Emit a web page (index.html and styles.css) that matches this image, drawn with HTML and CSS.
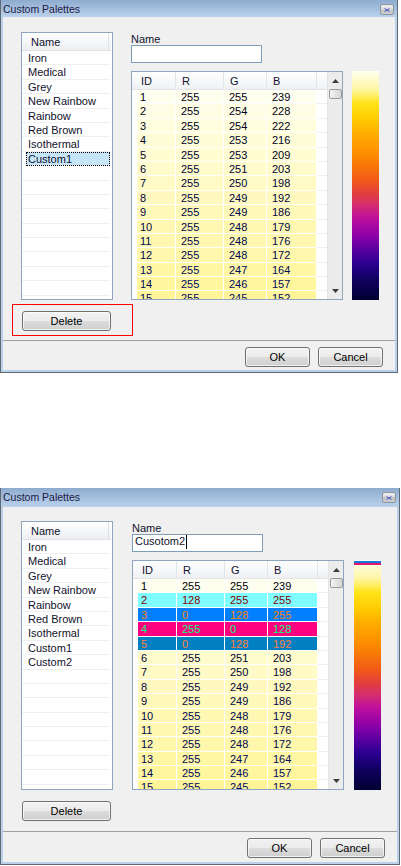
FILE: index.html
```html
<!DOCTYPE html>
<html lang="en">
<head>
    <meta charset="UTF-8">
    <title>Custom Palettes</title>
    <link rel="stylesheet" href="styles.css">
</head>
<body>
    <!-- first state: Custom1 selected -->
    <div class="dialog dialog--a">
        <div class="titlebar">
            <span class="title">Custom Palettes</span>
            <span class="close-btn"><svg width="6" height="4" viewBox="0 0 6 4"><path d="M0.5 0.5 L5.5 3.5 M5.5 0.5 L0.5 3.5" stroke="#4a52d0" stroke-width="1"/></svg></span>
        </div>
        <div class="client">
            <div class="main">
                <div class="palette-list">
                    <div class="list-header"><span>Name</span></div>
                    <div class="list-rows" id="listA"></div>
                </div>
                <div class="editor">
                    <div class="editor-label">Name</div>
                    <div class="name-input"></div>
                    <div class="editor-body">
                        <div class="grid">
                            <div class="grid-main">
                                <div class="grid-head">
                                    <span class="gh gh-pre"></span>
                                    <span class="gh c-id">ID</span>
                                    <span class="gh c-r">R</span>
                                    <span class="gh c-g">G</span>
                                    <span class="gh c-b">B</span>
                                    <span class="gh gh-fill"></span>
                                </div>
                                <div class="grid-rows" id="gridA"></div>
                            </div>
                            <div class="scrollbar">
                                <div class="sb-btn"><svg width="7" height="4" viewBox="0 0 7 4"><polygon points="0,4 3.5,0 7,4" fill="#3c3c3c"/></svg></div>
                                <div class="sb-thumb"></div>
                                <div class="sb-track"></div>
                                <div class="sb-btn"><svg width="7" height="4" viewBox="0 0 7 4"><polygon points="0,0 7,0 3.5,4" fill="#3c3c3c"/></svg></div>
                            </div>
                        </div>
                        <div class="gradient-bar"></div>
                    </div>
                </div>
            </div>
            <div class="delete-row">
                <div class="delete-wrap">
                    <button class="btn btn-delete">Delete</button>
                    <span class="mark-box"></span>
                </div>
            </div>
            <div class="separator"></div>
            <div class="footer">
                <button class="btn btn-small">OK</button>
                <button class="btn btn-small">Cancel</button>
            </div>
        </div>
    </div>

    <!-- second state: Custom2 being edited -->
    <div class="dialog dialog--b">
        <div class="titlebar">
            <span class="title">Custom Palettes</span>
            <span class="close-btn"><svg width="6" height="4" viewBox="0 0 6 4"><path d="M0.5 0.5 L5.5 3.5 M5.5 0.5 L0.5 3.5" stroke="#4a52d0" stroke-width="1"/></svg></span>
        </div>
        <div class="client">
            <div class="main">
                <div class="palette-list">
                    <div class="list-header"><span>Name</span></div>
                    <div class="list-rows" id="listB"></div>
                </div>
                <div class="editor">
                    <div class="editor-label">Name</div>
                    <div class="name-input">Cusotom2<span class="caret"></span></div>
                    <div class="editor-body">
                        <div class="grid">
                            <div class="grid-main">
                                <div class="grid-head">
                                    <span class="gh gh-pre"></span>
                                    <span class="gh c-id">ID</span>
                                    <span class="gh c-r">R</span>
                                    <span class="gh c-g">G</span>
                                    <span class="gh c-b">B</span>
                                    <span class="gh gh-fill"></span>
                                </div>
                                <div class="grid-rows" id="gridB"></div>
                            </div>
                            <div class="scrollbar">
                                <div class="sb-btn"><svg width="7" height="4" viewBox="0 0 7 4"><polygon points="0,4 3.5,0 7,4" fill="#3c3c3c"/></svg></div>
                                <div class="sb-thumb"></div>
                                <div class="sb-track"></div>
                                <div class="sb-btn"><svg width="7" height="4" viewBox="0 0 7 4"><polygon points="0,0 7,0 3.5,4" fill="#3c3c3c"/></svg></div>
                            </div>
                        </div>
                        <div class="gradient-bar gradient-bar--marked"></div>
                    </div>
                </div>
            </div>
            <div class="delete-row">
                <div class="delete-wrap">
                    <button class="btn btn-delete">Delete</button>
                </div>
            </div>
            <div class="separator"></div>
            <div class="footer">
                <button class="btn btn-small">OK</button>
                <button class="btn btn-small">Cancel</button>
            </div>
        </div>
    </div>

    <script>
        document.addEventListener('DOMContentLoaded', () => {
            const names = ['Iron', 'Medical', 'Grey', 'New Rainbow', 'Rainbow', 'Red Brown', 'Isothermal', 'Custom1'];
            const basePalette = [
                [1, 255, 255, 239], [2, 255, 254, 228], [3, 255, 254, 222], [4, 255, 253, 216],
                [5, 255, 253, 209], [6, 255, 251, 203], [7, 255, 250, 198], [8, 255, 249, 192],
                [9, 255, 249, 186], [10, 255, 248, 179], [11, 255, 248, 176], [12, 255, 248, 172],
                [13, 255, 247, 164], [14, 255, 246, 157], [15, 255, 245, 152]
            ];

            // Custom2: rows 2-5 edited by the user
            const editedPalette = basePalette.map(row => row.slice());
            editedPalette[1] = [2, 128, 255, 255];
            editedPalette[2] = [3, 0, 128, 255];
            editedPalette[3] = [4, 255, 0, 128];
            editedPalette[4] = [5, 0, 128, 192];

            function fillList(el, items, selected) {
                for (let i = 0; i < 18; i++) {
                    const row = document.createElement('div');
                    row.className = 'list-row';
                    if (items[i]) row.textContent = items[i];
                    if (items[i] && items[i] === selected) row.classList.add('selected');
                    el.appendChild(row);
                }
            }

            function fillGrid(el, rows) {
                rows.forEach(([id, r, g, b]) => {
                    const row = document.createElement('div');
                    row.className = 'grid-row';
                    const bg = `rgb(${r}, ${g}, ${b})`;
                    const fg = `rgb(${255 - r}, ${255 - g}, ${255 - b})`;
                    let html = '<span class="gc gh-pre"></span>';
                    [['c-id', id], ['c-r', r], ['c-g', g], ['c-b', b]].forEach(([cls, val]) => {
                        html += `<span class="gc ${cls}" style="background:${bg};color:${fg}">${val}</span>`;
                    });
                    html += '<span class="gc gc-fill"></span>';
                    row.innerHTML = html;
                    el.appendChild(row);
                });
            }

            fillList(document.getElementById('listA'), names, 'Custom1');
            fillList(document.getElementById('listB'), names.concat('Custom2'), null);
            fillGrid(document.getElementById('gridA'), basePalette);
            fillGrid(document.getElementById('gridB'), editedPalette);
        });
    </script>
</body>
</html>
```

FILE: styles.css
```css
* { box-sizing: border-box; }
body { margin: 0; background: #fff; font-family: "Liberation Sans", Arial, sans-serif; font-size: 11px; color: #12122e; }

.dialog { width: var(--win-w); border: 1px solid #5f6873; border-top: 0; background: #f0f0f0; }
.dialog--a { --win-w: 398px; --title-h: 17px; --top-pad: 15px; --pane-h: 268px; --col-gap: 18px; --bar-gap: 9px; --sep-gap: 9px; --bottom-pad: 3px; }
.dialog--b { --win-w: 400px; --title-h: 19px; --top-pad: 14px; --pane-h: 269px; --col-gap: 19px; --bar-gap: 10px; --sep-gap: 10px; --bottom-pad: 4px; margin-top: 115px; }

.titlebar { height: var(--title-h); display: flex; justify-content: space-between; align-items: flex-start; padding: 0 3px 0 2px; background: linear-gradient(#8eabcf, #bad2eb); overflow: hidden; }
.title { line-height: 19px; font-size: 10.5px; color: #1a1a46; }
.close-btn { width: 14px; height: 11px; margin-top: 4px; display: flex; align-items: center; justify-content: center; border: 1px solid #8b96a3; border-radius: 2px; background: linear-gradient(#efefef, #d8d8d8 50%, #c4c4c4 50%, #cdcdcd); }

.client { border: 2px solid #b9d1ea; border-top: 0; padding: var(--top-pad) 12px var(--bottom-pad) 18px; }
.main { display: flex; height: var(--pane-h); }

/* palette name list */
.palette-list { width: 92px; border: 1px solid #8fa5bf; background: #fff; display: flex; flex-direction: column; padding-right: 1px; overflow: hidden; }
.list-header { height: 18px; flex-shrink: 0; line-height: 18px; display: flex; background: linear-gradient(#ffffff, #f6f7f8 50%, #eceef1); border-bottom: 1px solid #dfe3e8; }
.list-header span { flex: 1; padding-left: 9px; border-right: 1px solid #dfe3e8; margin-right: 2px; }
.list-rows { flex: 1; min-height: 0; overflow: hidden; }
.list-row { height: 14.4px; line-height: 14px; padding-left: 6px; margin-right: 1px; border-bottom: 1px solid #efefef; white-space: nowrap; }
.list-row.selected { margin-left: 4px; padding-left: 2px; background: #c7e5f8; outline: 1px dotted #000; outline-offset: -1px; }

/* editor side */
.editor { margin-left: var(--col-gap); display: flex; flex-direction: column; }
.editor-label { height: 13px; flex-shrink: 0; line-height: 15px; }
.name-input { width: 131px; height: 18px; flex-shrink: 0; border: 1px solid #7f9db9; background: #fff; padding: 0 2px; line-height: 13px; white-space: nowrap; }
.caret { display: inline-block; width: 1px; height: 14px; margin-left: 1px; background: #000; vertical-align: top; }
.editor-body { flex: 1; min-height: 0; margin-top: 8px; display: flex; }

.grid { width: 212px; border: 1px solid #8fa5bf; background: #fff; display: flex; }
.grid-main { flex: 1; min-height: 0; display: flex; flex-direction: column; overflow: hidden; }
.grid-head { height: 18px; flex-shrink: 0; line-height: 18px; display: flex; background: linear-gradient(#ffffff, #f7f8f9 50%, #eef0f2); border-bottom: 1px solid #e2e5ea; }
.gh { border-right: 1px solid #e2e5ea; padding-left: 6px; }
.gh.c-id { padding-left: 4px; }
.gh.gh-pre { border-right: 0; padding: 0; }
.gh.gh-fill { flex: 1; border-right: 0; }
.grid-rows { flex: 1; min-height: 0; overflow: hidden; }
.grid-row { height: 14.4px; display: flex; }
.gc { height: 100%; line-height: 14px; padding-left: 5px; border-right: 1px solid #fff; border-bottom: 1px solid #fff; }
.gc.c-id { padding-left: 3px; }
.gc.gh-pre { border-right: 0; padding: 0; }
.gc.gc-fill { flex: 1; border-right: 0; border-bottom-color: #f0f0f0; }
.gh-pre { width: 5px; flex-shrink: 0; }
.c-id { width: 39px; flex-shrink: 0; }
.c-r { width: 48px; flex-shrink: 0; }
.c-g { width: 43px; flex-shrink: 0; }
.c-b { width: 50px; flex-shrink: 0; }

.scrollbar { width: 15px; display: flex; flex-direction: column; background: #ececec; border-left: 1px solid #e4e4e4; }
.sb-btn { height: 17px; flex-shrink: 0; display: flex; align-items: center; justify-content: center; }
.sb-thumb { height: 10px; flex-shrink: 0; margin-left: 1px; border: 1px solid #9a9a9a; border-radius: 2px; background: linear-gradient(90deg, #f5f5f5, #e4e4e4 50%, #d6d6d6); }
.sb-track { flex: 1; }

.gradient-bar { width: 27px; margin-left: var(--bar-gap); background: linear-gradient(#fffff0 0%, #fff6a4 8%, #ffe41a 14%, #ffcc00 21%, #ffaa00 28%, #ff9200 35%, #f87808 41%, #f05818 48%, #e03c40 54%, #d6306a 58%, #c0109c 64%, #8c00a8 72%, #5a00a0 78%, #2a0090 84%, #100060 91%, #000030 100%); }
.gradient-bar--marked { background: linear-gradient(#ffffff 0 1px, #1a78d8 1px 3px, #e0186c 3px 5px, transparent 5px), linear-gradient(#fffff0 0%, #fff6a4 8%, #ffe41a 14%, #ffcc00 21%, #ffaa00 28%, #ff9200 35%, #f87808 41%, #f05818 48%, #e03c40 54%, #d6306a 58%, #c0109c 64%, #8c00a8 72%, #5a00a0 78%, #2a0090 84%, #100060 91%, #000030 100%); }

/* buttons */
.btn { height: 20px; padding: 0; border: 1px solid #707070; border-radius: 3px; background: linear-gradient(#f2f2f2, #ebebeb 50%, #dddddd 50%, #cfcfcf); box-shadow: inset 0 0 0 1px rgba(255,255,255,0.7); font: inherit; color: #000; line-height: 18px; }
.delete-row { margin-top: 11px; }
.delete-wrap { position: relative; display: inline-block; margin-left: 1px; }
.btn-delete { width: 89px; display: block; }
.mark-box { position: absolute; left: -10px; top: -7px; width: 121px; height: 32px; border: 1px solid #f00; }
.separator { height: 1px; background: #a0a0a0; margin: var(--sep-gap) -12px 0 -18px; }
.footer { display: flex; justify-content: flex-end; gap: 8px; margin-top: 6px; }
.btn-small { width: 65px; }
```
